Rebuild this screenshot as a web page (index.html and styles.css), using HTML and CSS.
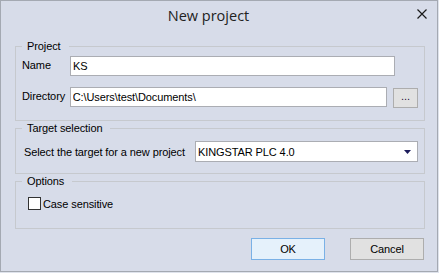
FILE: index.html
```html
<!DOCTYPE html>
<html lang="en">
<head>
    <meta charset="UTF-8">
    <meta name="viewport" content="width=device-width, initial-scale=1.0">
    <title>New project</title>
    <link rel="stylesheet" href="styles.css">
</head>
<body>
    <div class="window">
        <!-- Title bar -->
        <div class="titlebar">
            <div class="title">New project</div>
            <svg class="close" width="10" height="10" viewBox="0 0 10 10">
                <path d="M0.5 0.5 L9.5 9.5 M9.5 0.5 L0.5 9.5" stroke="#1a1a1a" stroke-width="1.2" fill="none"/>
            </svg>
        </div>

        <div class="content">
            <!-- Project -->
            <fieldset class="group group-project">
                <legend>Project</legend>
                <div class="row">
                    <label class="field-label">Name</label>
                    <input type="text" class="text-field name-field" value="KS">
                </div>
                <div class="row row-dir">
                    <label class="field-label">Directory</label>
                    <input type="text" class="text-field dir-field" value="C:\Users\test\Documents\">
                    <button class="browse">...</button>
                </div>
            </fieldset>

            <!-- Target selection -->
            <fieldset class="group group-target">
                <legend>Target selection</legend>
                <div class="row row-target">
                    <label class="target-label">Select the target for a new project</label>
                    <div class="combo">
                        <span>KINGSTAR PLC 4.0</span>
                        <svg width="7" height="4" viewBox="0 0 7 4">
                            <polygon points="0,0 7,0 3.5,4" fill="#1c1c5c"/>
                        </svg>
                    </div>
                </div>
            </fieldset>

            <!-- Options -->
            <fieldset class="group group-options">
                <legend>Options</legend>
                <label class="check">
                    <input type="checkbox">
                    <span>Case sensitive</span>
                </label>
            </fieldset>

            <div class="actions">
                <button class="btn btn-ok">OK</button>
                <button class="btn">Cancel</button>
            </div>
        </div>
    </div>
</body>
</html>
```

FILE: styles.css
```css
body {
    margin: 0;
    padding: 0;
    background-color: #dfe3ec;
    font-family: "Liberation Sans", Arial, sans-serif;
    font-size: 11px;
    letter-spacing: -0.1px;
    color: #000;
}
.window {
    width: 438px;
    height: 272px;
    box-sizing: border-box;
    border: 1px solid #a4a9b2;
    background-color: #d7dce9;
}
.titlebar {
    height: 38px;
    display: flex;
    align-items: flex-start;
}
.title {
    width: 415px;
    padding-top: 5px;
    text-align: center;
    font-family: "Open Sans", "Noto Sans", sans-serif;
    font-size: 14.5px;
    line-height: 20px;
    letter-spacing: 0;
    color: #222;
}
.close {
    margin: 8px 10px 0 1px;
}
.content {
    padding: 0 12px 0 14px;
}
.group {
    margin: 0;
    border: 1px solid #c6c9ce;
    padding: 0 6px;
    min-width: 0;
}
.group legend {
    margin-left: 0;
    padding: 0 8px 0 5px;
    line-height: 14px;
}
.group-project {
    padding-top: 3px;
    padding-bottom: 12px;
}
.group-target {
    padding-top: 6px;
    padding-bottom: 11px;
}
.group-options {
    padding-top: 8px;
    padding-bottom: 17px;
}
.row {
    display: flex;
    align-items: flex-start;
}
.row-dir {
    margin-top: 11px;
}
.field-label {
    width: 48px;
    padding-top: 2px;
    line-height: 14px;
}
.text-field {
    box-sizing: border-box;
    height: 20px;
    margin: 0;
    padding: 0 2px;
    border: 1px solid #abadb3;
    background-color: #fff;
    font-family: inherit;
    font-size: 11px;
    letter-spacing: -0.1px;
    color: #000;
    outline: none;
}
.name-field {
    width: 325px;
}
.dir-field {
    width: 319px;
}
.browse {
    box-sizing: border-box;
    width: 25px;
    height: 20px;
    margin: 1px 0 0 6px;
    padding: 0 0 4px 0;
    border: 1px solid #adadad;
    background-color: #e1e1e1;
    font-family: inherit;
    font-size: 11px;
    color: #2a0a3a;
}
.row-target {
    align-items: center;
}
.target-label {
    width: 171px;
    margin-left: 2px;
    line-height: 14px;
}
.combo {
    box-sizing: border-box;
    width: 223px;
    height: 21px;
    display: flex;
    align-items: center;
    justify-content: space-between;
    padding: 0 6px 0 2px;
    border: 1px solid #abadb3;
    background-color: #fff;
}
.check {
    display: flex;
    align-items: center;
    margin-left: 6px;
}
.check input {
    appearance: none;
    width: 13px;
    height: 13px;
    margin: 0 2px 0 0;
    border: 1px solid #333;
    background-color: #fff;
}
.check span {
    line-height: 14px;
    padding-top: 1px;
}
.actions {
    display: flex;
    justify-content: flex-end;
    gap: 25px;
    margin: 9px 1px 0 0;
}
.btn {
    box-sizing: border-box;
    width: 74px;
    height: 22px;
    margin: 0;
    padding: 0;
    border: 1px solid #adadad;
    background-color: #e1e1e1;
    font-family: inherit;
    font-size: 11px;
    letter-spacing: -0.1px;
    color: #000;
}
.btn-ok {
    border-color: #7ab1e6;
    background-color: #e5f1fb;
}
```
